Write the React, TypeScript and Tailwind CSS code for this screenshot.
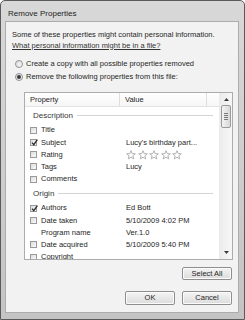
import React from "react";

function Check({ checked }: { checked?: boolean }) {
  return (
    <span className="relative w-[7px] h-[7px] shrink-0 border border-[#9a9a9a] bg-linear-to-br from-[#dcdcdc] to-[#fbfbfb]">
      {checked && (
        <svg width="9" height="9" viewBox="0 0 9 9" className="absolute left-[-1px] top-[-2px]">
          <path d="M2 4.6 L3.8 6.6 L7.4 1.6" stroke="#2a2a2a" strokeWidth="1.3" fill="none" />
        </svg>
      )}
    </span>
  );
}

function Star() {
  return (
    <svg width="10" height="10" viewBox="0 0 10 10">
      <path
        d="M5 0.7 L6.2 3.6 L9.3 3.8 L6.9 5.8 L7.7 8.9 L5 7.2 L2.3 8.9 L3.1 5.8 L0.7 3.8 L3.8 3.6 Z"
        fill="#ffffff"
        stroke="#a0a0a0"
        strokeWidth="0.8"
        strokeLinejoin="round"
      />
    </svg>
  );
}

function Row({ label, value, checked, box = true }: { label: string; value?: React.ReactNode; checked?: boolean; box?: boolean }) {
  return (
    <div className="h-[12.25px] flex items-center shrink-0">
      <div className="w-[101px] flex items-center pl-[5px] gap-[4px]">
        {box ? <Check checked={checked} /> : <span className="w-[7px] h-[7px] shrink-0" />}
        <span className="whitespace-nowrap">{label}</span>
      </div>
      <div className="whitespace-nowrap flex items-center">{value}</div>
    </div>
  );
}

function Group({ title, h }: { title: string; h: string }) {
  return (
    <div className={`${h} flex items-center pl-[8px] pr-[6px] gap-[4px] shrink-0`}>
      <span className="text-[#383838] text-[8px]">{title}</span>
      <div className="flex-1 h-px bg-[#d4d4d4]" />
    </div>
  );
}

function Btn({ label, h }: { label: string; h: string }) {
  return (
    <div className={`w-[50px] ${h} rounded-[2px] border border-[#8e8e8e] bg-linear-to-b from-[#f4f4f4] to-[#dcdcdc] flex items-center justify-center shadow-[inset_0_0_0_1px_#fbfbfb]`}>
      {label}
    </div>
  );
}

function Radio({ on }: { on?: boolean }) {
  return (
    <span className="w-[8px] h-[8px] rounded-full border border-[#909090] bg-linear-to-br from-[#dcdcdc] to-[#fafafa] flex items-center justify-center shrink-0">
      {on && <span className="w-[4px] h-[4px] rounded-full bg-[#3a3a3a]" />}
    </span>
  );
}

export default function App() {
  return (
    <div className="w-[245px] h-[320px] flex flex-col border border-[#5a5a5a] rounded-t-[5px] bg-linear-to-b from-[#d8d8d8] to-[#c4c4c4] font-['Liberation_Sans',Arial,sans-serif] text-[7.5px] text-[#262626] leading-none overflow-hidden">
      <div className="h-[20px] shrink-0 flex items-end pb-[3px] pl-[7px] text-[8px] text-[#1e1e1e]">Remove Properties</div>
      <div className="ml-[4px] mr-[5px] h-[292px] shrink-0 border border-[#acacac] bg-[#f2f2f2] flex flex-col pl-[6px] pr-[6px] pt-[7px]">
        <div className="h-[11px] flex items-center whitespace-nowrap">Some of these properties might contain personal information.</div>
        <div className="h-[11px] flex items-center whitespace-nowrap underline text-[#333333]">What personal information might be in a file?</div>
        <div className="h-[12px] mt-[7px] flex items-center gap-[3px] ml-[3px] whitespace-nowrap">
          <Radio />
          <span>Create a copy with all possible properties removed</span>
        </div>
        <div className="h-[12px] mt-[1px] flex items-center gap-[3px] ml-[3px] whitespace-nowrap">
          <Radio on />
          <span>Remove the following properties from this file:</span>
        </div>
        <div className="mt-[9px] ml-[12px] w-[209px] h-[168px] border border-[#acacac] bg-white flex overflow-hidden">
          <div className="w-[194px] flex flex-col overflow-hidden">
            <div className="h-[14px] shrink-0 flex border-b border-[#e3e3e3] bg-linear-to-b from-white to-[#f6f6f6]">
              <div className="w-[95px] pl-[5px] flex items-center border-r border-[#dedede]">Property</div>
              <div className="w-[87px] pl-[5px] flex items-center border-r border-[#dedede]">Value</div>
              <div className="flex-1" />
            </div>
            <Group title="Description" h="h-[17px]" />
            <Row label="Title" />
            <Row label="Subject" checked value="Lucy's birthday part..." />
            <Row
              label="Rating"
              value={
                <span className="flex gap-[1.5px]">
                  <Star />
                  <Star />
                  <Star />
                  <Star />
                  <Star />
                </span>
              }
            />
            <Row label="Tags" value="Lucy" />
            <Row label="Comments" />
            <Group title="Origin" h="h-[16.75px]" />
            <Row label="Authors" checked value="Ed Bott" />
            <Row label="Date taken" value="5/10/2009 4:02 PM" />
            <Row label="Program name" box={false} value="Ver.1.0" />
            <Row label="Date acquired" value="5/10/2009 5:40 PM" />
            <Row label="Copyright" />
          </div>
          <div className="w-[13px] flex flex-col items-center bg-linear-to-r from-[#ececec] to-[#f7f7f7] border-l border-[#ebebeb]">
            <div className="h-[12px] flex items-center justify-center">
              <svg width="5" height="3" viewBox="0 0 5 3">
                <path d="M0 3 L2.5 0 L5 3 Z" fill="#3a3a3a" />
              </svg>
            </div>
            <div className="w-[10px] h-[23px] rounded-[2px] border border-[#9a9a9a] bg-linear-to-r from-[#f3f3f3] to-[#d9d9d9] flex flex-col items-center justify-center gap-[1px]">
              <span className="w-[4px] h-px bg-[#7a7a7a]" />
              <span className="w-[4px] h-px bg-[#7a7a7a]" />
              <span className="w-[4px] h-px bg-[#7a7a7a]" />
              <span className="w-[4px] h-px bg-[#7a7a7a]" />
            </div>
            <div className="flex-1" />
            <div className="h-[14px] flex items-center justify-center">
              <svg width="5" height="3" viewBox="0 0 5 3">
                <path d="M0 0 L2.5 3 L5 0 Z" fill="#3a3a3a" />
              </svg>
            </div>
          </div>
        </div>
        <div className="mt-[7px] flex justify-end">
          <Btn label="Select All" h="h-[13px]" />
        </div>
        <div className="mt-[11px] flex justify-end gap-[7px]">
          <Btn label="OK" h="h-[14px]" />
          <Btn label="Cancel" h="h-[14px]" />
        </div>
      </div>
    </div>
  );
}
